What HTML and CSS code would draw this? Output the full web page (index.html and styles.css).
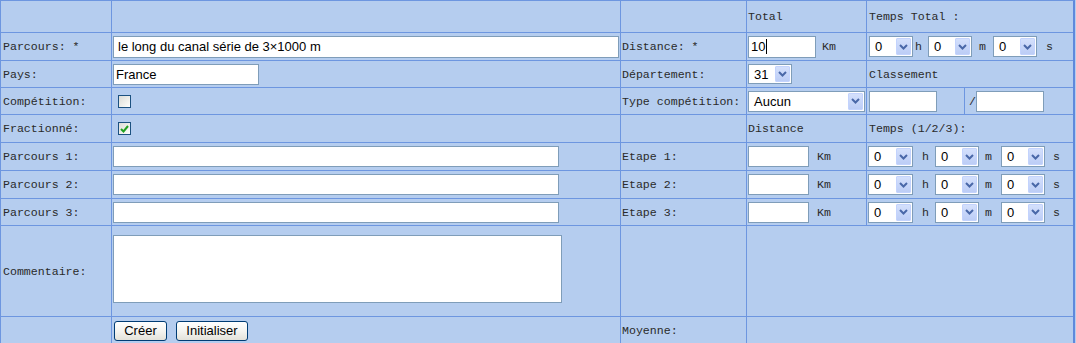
FILE: index.html
```html
<!DOCTYPE html>
<html lang="fr">
<head>
<meta charset="utf-8">
<title>Parcours</title>
<link rel="stylesheet" href="styles.css">
</head>
<body>
<div class="form">
  <!-- row 0 -->
  <div class="c"></div>
  <div class="c"></div>
  <div class="c"></div>
  <div class="c c4">Total</div>
  <div class="c c5">Temps Total :</div>

  <!-- row 1 -->
  <div class="c">Parcours: *</div>
  <div class="c c2"><input class="in in-parcours" type="text" value="le long du canal série de 3×1000 m"></div>
  <div class="c c3">Distance: *</div>
  <div class="c c4"><span class="in in-dist fake">10<span class="caret"></span></span><span class="unit km1">Km</span></div>
  <div class="c c5 time1">
    <span class="sel"><span class="val">0</span><span class="btn"><svg width="9" height="6" viewBox="0 0 9 6"><polyline points="1,1 4.5,4.5 8,1" fill="none" stroke="#4a68a8" stroke-width="2"/></svg></span></span>
    <span class="unit u-h">h</span>
    <span class="sel s2"><span class="val">0</span><span class="btn"><svg width="9" height="6" viewBox="0 0 9 6"><polyline points="1,1 4.5,4.5 8,1" fill="none" stroke="#4a68a8" stroke-width="2"/></svg></span></span>
    <span class="unit u-m">m</span>
    <span class="sel s3"><span class="val">0</span><span class="btn"><svg width="9" height="6" viewBox="0 0 9 6"><polyline points="1,1 4.5,4.5 8,1" fill="none" stroke="#4a68a8" stroke-width="2"/></svg></span></span>
    <span class="unit u-s">s</span>
  </div>

  <!-- row 2 -->
  <div class="c">Pays:</div>
  <div class="c c2"><input class="in in-pays" type="text" value="France"></div>
  <div class="c c3">Département:</div>
  <div class="c c4"><span class="sel sel-dep"><span class="val">31</span><span class="btn"><svg width="9" height="6" viewBox="0 0 9 6"><polyline points="1,1 4.5,4.5 8,1" fill="none" stroke="#4a68a8" stroke-width="2"/></svg></span></span></div>
  <div class="c c5">Classement</div>

  <!-- row 3 -->
  <div class="c">Compétition:</div>
  <div class="c c2"><span class="cb"></span></div>
  <div class="c c3">Type compétition:</div>
  <div class="c c4"><span class="sel sel-type"><span class="val">Aucun</span><span class="btn"><svg width="9" height="6" viewBox="0 0 9 6"><polyline points="1,1 4.5,4.5 8,1" fill="none" stroke="#4a68a8" stroke-width="2"/></svg></span></span></div>
  <div class="c c5 split">
    <div class="sub sub1"><input class="in in-cl" type="text" value=""></div>
    <div class="sub sub2"><span class="slash">/</span><input class="in in-cl" type="text" value=""></div>
  </div>

  <!-- row 4 -->
  <div class="c">Fractionné:</div>
  <div class="c c2"><span class="cb checked"><svg width="9" height="8" viewBox="0 0 9 8"><polyline points="1,4 3.5,6.5 8,1" fill="none" stroke="#21a121" stroke-width="2"/></svg></span></div>
  <div class="c"></div>
  <div class="c c4">Distance</div>
  <div class="c c5">Temps (1/2/3):</div>

  <!-- rows 5-7 -->
  <div class="c">Parcours 1:</div>
  <div class="c c2"><input class="in in-p" type="text" value=""></div>
  <div class="c c3">Etape 1:</div>
  <div class="c c4"><input class="in in-etape" type="text" value=""><span class="unit km2">Km</span></div>
  <div class="c c5 time2">
    <span class="sel"><span class="val">0</span><span class="btn"><svg width="9" height="6" viewBox="0 0 9 6"><polyline points="1,1 4.5,4.5 8,1" fill="none" stroke="#4a68a8" stroke-width="2"/></svg></span></span>
    <span class="unit u-h">h</span>
    <span class="sel s2"><span class="val">0</span><span class="btn"><svg width="9" height="6" viewBox="0 0 9 6"><polyline points="1,1 4.5,4.5 8,1" fill="none" stroke="#4a68a8" stroke-width="2"/></svg></span></span>
    <span class="unit u-m">m</span>
    <span class="sel s3"><span class="val">0</span><span class="btn"><svg width="9" height="6" viewBox="0 0 9 6"><polyline points="1,1 4.5,4.5 8,1" fill="none" stroke="#4a68a8" stroke-width="2"/></svg></span></span>
    <span class="unit u-s">s</span>
  </div>

  <div class="c">Parcours 2:</div>
  <div class="c c2"><input class="in in-p" type="text" value=""></div>
  <div class="c c3">Etape 2:</div>
  <div class="c c4"><input class="in in-etape" type="text" value=""><span class="unit km2">Km</span></div>
  <div class="c c5 time2">
    <span class="sel"><span class="val">0</span><span class="btn"><svg width="9" height="6" viewBox="0 0 9 6"><polyline points="1,1 4.5,4.5 8,1" fill="none" stroke="#4a68a8" stroke-width="2"/></svg></span></span>
    <span class="unit u-h">h</span>
    <span class="sel s2"><span class="val">0</span><span class="btn"><svg width="9" height="6" viewBox="0 0 9 6"><polyline points="1,1 4.5,4.5 8,1" fill="none" stroke="#4a68a8" stroke-width="2"/></svg></span></span>
    <span class="unit u-m">m</span>
    <span class="sel s3"><span class="val">0</span><span class="btn"><svg width="9" height="6" viewBox="0 0 9 6"><polyline points="1,1 4.5,4.5 8,1" fill="none" stroke="#4a68a8" stroke-width="2"/></svg></span></span>
    <span class="unit u-s">s</span>
  </div>

  <div class="c">Parcours 3:</div>
  <div class="c c2"><input class="in in-p" type="text" value=""></div>
  <div class="c c3">Etape 3:</div>
  <div class="c c4"><input class="in in-etape" type="text" value=""><span class="unit km2">Km</span></div>
  <div class="c c5 time2">
    <span class="sel"><span class="val">0</span><span class="btn"><svg width="9" height="6" viewBox="0 0 9 6"><polyline points="1,1 4.5,4.5 8,1" fill="none" stroke="#4a68a8" stroke-width="2"/></svg></span></span>
    <span class="unit u-h">h</span>
    <span class="sel s2"><span class="val">0</span><span class="btn"><svg width="9" height="6" viewBox="0 0 9 6"><polyline points="1,1 4.5,4.5 8,1" fill="none" stroke="#4a68a8" stroke-width="2"/></svg></span></span>
    <span class="unit u-m">m</span>
    <span class="sel s3"><span class="val">0</span><span class="btn"><svg width="9" height="6" viewBox="0 0 9 6"><polyline points="1,1 4.5,4.5 8,1" fill="none" stroke="#4a68a8" stroke-width="2"/></svg></span></span>
    <span class="unit u-s">s</span>
  </div>

  <!-- row 8 -->
  <div class="c">Commentaire:</div>
  <div class="c c2"><textarea class="ta"></textarea></div>
  <div class="c"></div>
  <div class="c span2"></div>

  <!-- row 9 -->
  <div class="c"></div>
  <div class="c c2"><button class="bt bt1" type="button">Créer</button><button class="bt bt2" type="button">Initialiser</button></div>
  <div class="c c3">Moyenne:</div>
  <div class="c span2"></div>
</div>
</body>
</html>
```

FILE: styles.css
```css
html, body {
  margin: 0;
  padding: 0;
  background: #b5cdef;
}

.form {
  display: grid;
  grid-template-columns: 110px 508px 125px 119px 206px;
  grid-template-rows: 31px 27px 26px 26px 27px 27px 27px 26px 90px 27px;
  gap: 1px;
  width: 1072px;
  background: #6d96e0;
  border-top: 1px solid #6d96e0;
  border-left: 1px solid #6d96e0;
  border-right: 2px solid #5f89dc;
  border-bottom: 1px solid #6d96e0;
  font-family: "Liberation Mono", "DejaVu Sans Mono", monospace;
  font-size: 11.6px;
  color: #2a2a2a;
}

.c {
  background: #b5cdef;
  display: flex;
  align-items: center;
  padding-left: 2px;
  white-space: nowrap;
  min-width: 0;
}

.c2 { padding-left: 1px; }
.c3 { padding-left: 1px; }
.c4 { padding-left: 1px; }
.c5 { padding-left: 2px; }

.span2 { grid-column: span 2; }

/* inputs */
.in {
  box-sizing: border-box;
  height: 21px;
  border: 1px solid #7f9db9;
  background: #fff;
  font-family: "Liberation Sans", Arial, sans-serif;
  font-size: 13px;
  color: #000;
  padding: 0 2px;
  margin: 0;
  outline: none;
}

.in-parcours { width: 506px; height: 22px; padding-left: 4px; }
.in-pays { width: 146px; }
.in-p { width: 446px; }
.in-dist { width: 68px; height: 22px; }
.in-etape { width: 61px; }
.in-cl { width: 68px; }

.fake {
  display: inline-flex;
  align-items: center;
}
.caret {
  display: inline-block;
  width: 1px;
  height: 15px;
  background: #000;
  margin-left: 1px;
}

.unit {
  font-family: "Liberation Mono", "DejaVu Sans Mono", monospace;
  font-size: 11.6px;
}
.km1 { margin-left: 6px; }
.km2 { margin-left: 8px; }

/* fake selects (XP style combo) */
.sel {
  box-sizing: border-box;
  display: inline-flex;
  align-items: center;
  justify-content: space-between;
  width: 44px;
  height: 21px;
  border: 1px solid #7f9db9;
  background: #fff;
  font-family: "Liberation Sans", Arial, sans-serif;
  font-size: 13px;
  color: #000;
  padding: 1px;
}
.sel .val { padding-left: 4px; }
.sel .btn {
  box-sizing: border-box;
  width: 15px;
  height: 17px;
  display: flex;
  align-items: center;
  justify-content: center;
  background: linear-gradient(180deg, #d4e0fc 0%, #bccdf6 100%);
  border: 1px solid #c3d3fd;
  border-radius: 1px;
}
.sel-dep { height: 20px; }
.sel-dep .btn { height: 16px; }
.sel-type { width: 117px; }

.time1 .u-h { margin-left: 2px; }
.time1 .s2 { margin-left: 6px; }
.time1 .u-m { margin-left: 7px; }
.time1 .s3 { margin-left: 7px; }
.time1 .u-s { margin-left: 9px; }

.time2 { padding-left: 1px; }
.time2 .sel { width: 45px; }
.time2 .u-h { margin-left: 9px; }
.time2 .s2 { margin-left: 6px; width: 44px; }
.time2 .u-m { margin-left: 6px; }
.time2 .s3 { margin-left: 9px; width: 44px; }
.time2 .u-s { margin-left: 8px; }

/* classement split */
.split {
  padding-left: 0;
  align-items: stretch;
}
.sub {
  display: flex;
  align-items: center;
}
.sub1 {
  width: 95px;
  padding-left: 2px;
  border-right: 1px solid #6d96e0;
  box-sizing: content-box;
}
.sub2 { padding-left: 4px; }
.slash { margin-right: 0; }

/* checkboxes */
.cb {
  box-sizing: border-box;
  display: inline-flex;
  align-items: center;
  justify-content: center;
  width: 13px;
  height: 13px;
  margin-left: 5px;
  border: 1px solid #1c5180;
  background: linear-gradient(135deg, #dcdcd7 0%, #f4f4f0 70%, #ffffff 100%);
}

/* textarea */
.ta {
  box-sizing: border-box;
  width: 449px;
  height: 68px;
  border: 1px solid #7f9db9;
  background: #fff;
  resize: none;
  margin: 0 0 4px 0;
  padding: 2px;
  font-family: "Liberation Sans", Arial, sans-serif;
  font-size: 13px;
}

/* buttons XP style */
.bt {
  box-sizing: border-box;
  height: 20px;
  border: 1px solid #003c74;
  border-radius: 3px;
  background: linear-gradient(180deg, #ffffff 0%, #f4f4f0 50%, #e3e2da 100%);
  font-family: "Liberation Sans", Arial, sans-serif;
  font-size: 13px;
  color: #000;
  padding: 0;
  margin: 0;
}
.bt1 { width: 53px; margin-left: 1px; }
.bt2 { width: 72px; margin-left: 9px; }
```
